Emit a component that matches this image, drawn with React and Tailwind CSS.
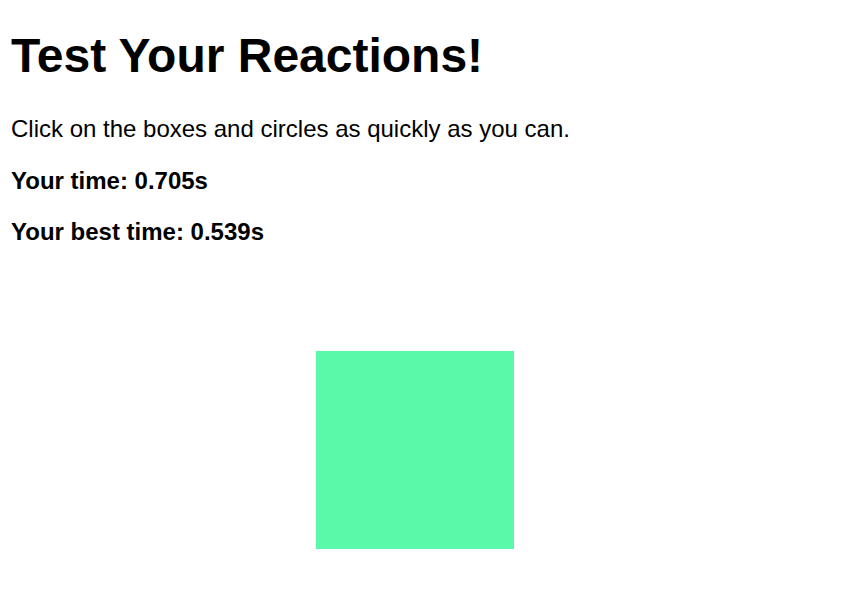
export default function App() {
  return (
    <div
      className="relative min-h-[601px] bg-white px-[11px] text-black"
      style={{ fontFamily: '"Liberation Sans", Arial, sans-serif' }}
    >
      <div className="pt-[28px]">
        <h1 className="m-0 text-[48px] font-bold leading-[1.15]">Test Your Reactions!</h1>
        <p className="mt-[32px] text-[24px] leading-[1.15]">
          Click on the boxes and circles as quickly as you can.
        </p>
        <p className="mt-[24px] text-[24px] font-bold leading-[1.15]">Your time: 0.705s</p>
        <p className="mt-[24px] text-[24px] font-bold leading-[1.15]">Your best time: 0.539s</p>
      </div>
      <div className="absolute left-[316px] top-[351px] h-[198px] w-[198px] bg-[#59f9a9]" />
    </div>
  );
}
